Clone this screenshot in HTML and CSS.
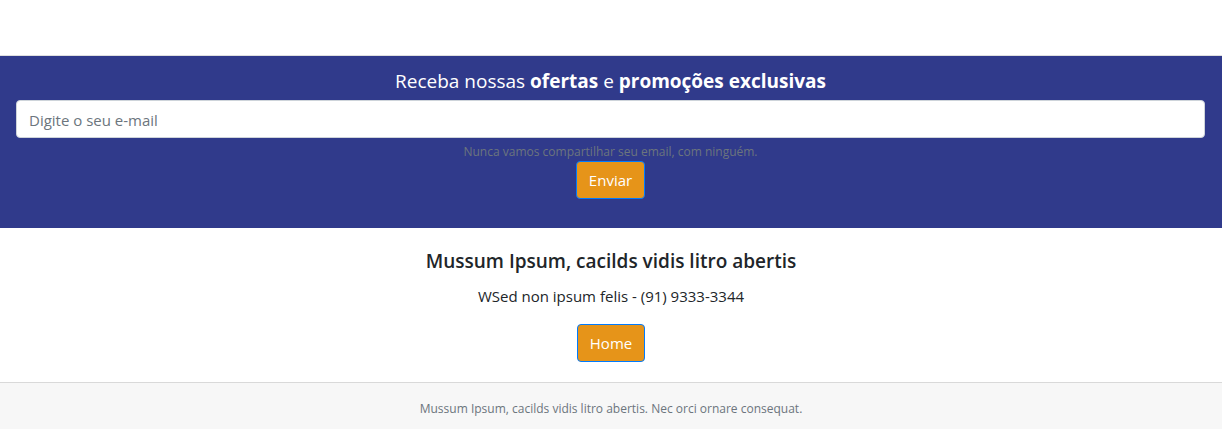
FILE: index.html
```html
<!DOCTYPE html>
<html lang="pt-BR">
<head>
<meta charset="utf-8">
<meta name="viewport" content="width=device-width, initial-scale=1">
<title>Mussum Ipsum</title>
<link rel="stylesheet" href="styles.css">
</head>
<body>
<main class="page">
  <section class="newsletter">
    <form class="newsletter-form">
      <label class="newsletter-title" for="email">Receba nossas <b>ofertas</b> e <b>promoções exclusivas</b></label>
      <input class="field" id="email" type="email" placeholder="Digite o seu e-mail" aria-describedby="email-help">
      <small class="help" id="email-help">Nunca vamos compartilhar seu email, com ninguém.</small>
      <button class="btn" type="submit">Enviar</button>
    </form>
  </section>
  <section class="contact">
    <h5 class="contact-title">Mussum Ipsum, cacilds vidis litro abertis</h5>
    <p class="contact-text">WSed non ipsum felis - (91) 9333-3344</p>
    <a class="btn" href="#">Home</a>
  </section>
</main>
<footer class="footer">Mussum Ipsum, cacilds vidis litro abertis. Nec orci ornare consequat.</footer>
</body>
</html>
```
FILE: styles.css
```css
* { box-sizing: border-box; }

body {
  margin: 0;
  font-family: "Segoe UI", "Open Sans", "Noto Sans", sans-serif;
  font-size: 15px;
  line-height: 24px;
  color: #212529;
  background: #fff;
}

.page { padding-top: 55px; }

.newsletter {
  padding: 13px 17px 29px 16px;
  border-top: 1px solid #dfdfdf;
  background: #303a8b;
  color: #fff;
}

.newsletter-form {
  display: flex;
  flex-direction: column;
  align-items: center;
}

.newsletter-title {
  margin-bottom: 7px;
  font-size: 19px;
}

.newsletter-title b { font-weight: 700; }

.field {
  width: 100%;
  height: 38px;
  padding: 7px 12px 5px;
  border: 1px solid #ced4da;
  border-radius: 4px;
  background: #fff;
  color: #495057;
  font: inherit;
}

.field::placeholder { color: #6c757d; opacity: 1; }

.help {
  margin-top: 5px;
  font-size: 12px;
  line-height: 18px;
  color: #6c757d;
}

.btn {
  display: inline-block;
  padding: 6px 12px;
  border: 1px solid #007bff;
  border-radius: 4px;
  background: #e69419;
  color: #fff;
  font: inherit;
  text-decoration: none;
}

.contact {
  padding: 21px 20px 20px;
  text-align: center;
}

.contact-title {
  margin: 0 0 11px;
  font-size: 19px;
  font-weight: 600;
}

.contact-text { margin: 0 0 16px; }

.footer {
  padding: 14px 20px 12px;
  border-top: 1px solid #d9d9d9;
  background: #f7f7f7;
  color: #6c757d;
  font-size: 12px;
  line-height: 24px;
  text-align: center;
}
```
